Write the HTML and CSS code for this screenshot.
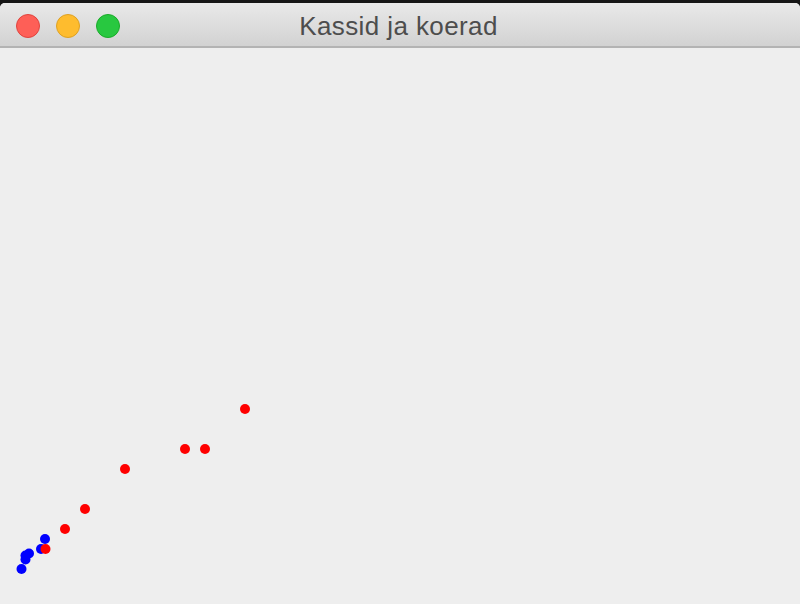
FILE: index.html
```html
<!DOCTYPE html>
<html>
<head>
<meta charset="utf-8">
<link rel="stylesheet" href="styles.css">
</head>
<body>
<div class="window">
  <div class="titlebar">
    <div class="lights">
      <span class="light red"></span>
      <span class="light yellow"></span>
      <span class="light green"></span>
    </div>
    <div class="title">Kassid ja koerad</div>
  </div>
  <div class="content">
    <svg class="canvas" width="800" height="556" viewBox="0 48 800 556">
      <g fill="#ff0000">
        <circle cx="245" cy="409" r="5"/>
        <circle cx="185" cy="449" r="5"/>
        <circle cx="205" cy="449" r="5"/>
        <circle cx="125" cy="469" r="5"/>
        <circle cx="85" cy="509" r="5"/>
        <circle cx="65" cy="529" r="5"/>
      </g>
      <g fill="#0000ff">
        <circle cx="45" cy="539" r="5"/>
        <circle cx="41" cy="549" r="5"/>
        <circle cx="29" cy="553.5" r="5"/>
        <circle cx="25.5" cy="555.5" r="5"/>
        <circle cx="25.5" cy="559.5" r="5"/>
        <circle cx="21.5" cy="569" r="5"/>
      </g>
      <circle cx="45.5" cy="549" r="5" fill="#ff0000"/>
    </svg>
  </div>
</div>
</body>
</html>
```

FILE: styles.css
```css
html, body {
  margin: 0;
  padding: 0;
  width: 800px;
  height: 604px;
  overflow: hidden;
  background: #161616;
}
.window {
  margin-top: 3px;
  height: 601px;
  display: flex;
  flex-direction: column;
  background: #eeeeee;
  border-radius: 5px 5px 0 0;
  overflow: hidden;
}
.titlebar {
  position: relative;
  height: 43px;
  flex: 0 0 auto;
  background: linear-gradient(#e9e9e9, #d2d2d2);
  border-bottom: 2px solid #b3b3b3;
  display: flex;
  align-items: center;
  justify-content: center;
}
.lights {
  position: absolute;
  left: 16px;
  top: 11px;
  display: flex;
  gap: 16px;
}
.light {
  width: 24px;
  height: 24px;
  border-radius: 50%;
  box-sizing: border-box;
}
.red { background: #fe5f57; border: 1px solid #e0443e; }
.yellow { background: #febc2e; border: 1px solid #dea123; }
.green { background: #28c840; border: 1px solid #1aab29; }
.title {
  font-family: "Liberation Sans", Arial, sans-serif;
  font-size: 26px;
  letter-spacing: 0.4px;
  color: #4d4d4d;
  margin-top: 4px;
  margin-left: -3px;
}
.content {
  flex: 1 1 auto;
  background: #eeeeee;
}
.canvas {
  display: block;
}
```
